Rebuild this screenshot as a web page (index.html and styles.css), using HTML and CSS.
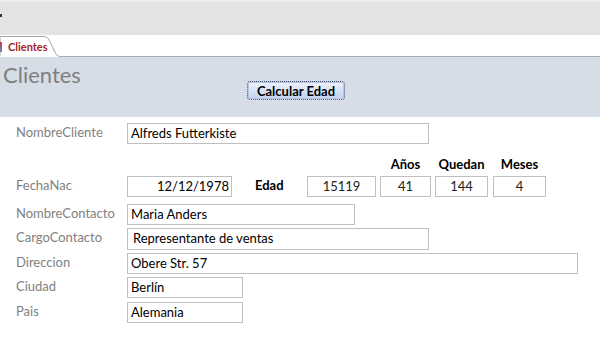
FILE: index.html
```html
<!DOCTYPE html>
<html lang="es">
<head>
<meta charset="utf-8">
<title>Clientes</title>
<link rel="stylesheet" href="styles.css">
</head>
<body>
<div class="app">
  <div class="topbar"><span class="glyph"></span></div>
  <div class="tabbar">
    <div class="tab">
      <svg class="tab-shape" width="60" height="22" viewBox="0 0 60 22" aria-hidden="true">
        <path d="M0 21.5 V1.5 H44 Q47 1.5 48.5 4 L56 19 Q57.5 21.5 60 21.5" fill="#fff" stroke="#a9a49a" stroke-width="1"/>
      </svg>
      <span class="tab-icon"></span>
      <span class="tab-label">Clientes</span>
    </div>
    <div class="tab-rest"></div>
  </div>
  <div class="header">
    <h1 class="title">Clientes</h1>
    <button class="calc-btn" type="button">Calcular Edad</button>
  </div>
  <div class="form">
    <div class="row row-1">
      <label class="lbl">NombreCliente</label>
      <div class="box w302">Alfreds Futterkiste</div>
    </div>
    <div class="row heads">
      <span class="head w51">Años</span>
      <span class="head w53">Quedan</span>
      <span class="head w53 last">Meses</span>
    </div>
    <div class="row row-date">
      <label class="lbl">FechaNac</label>
      <div class="box w105 right">12/12/1978</div>
      <span class="edad">Edad</span>
      <div class="box w69 center">15119</div>
      <div class="box w51 center">41</div>
      <div class="box w53 center">144</div>
      <div class="box w53 center last">4</div>
    </div>
    <div class="row r-contact">
      <label class="lbl">NombreContacto</label>
      <div class="box w228">Maria Anders</div>
    </div>
    <div class="row r-cargo">
      <label class="lbl">CargoContacto</label>
      <div class="box w302 pad5">Representante de ventas</div>
    </div>
    <div class="row r-dir">
      <label class="lbl">Direccion</label>
      <div class="box w451">Obere Str. 57</div>
    </div>
    <div class="row r-city">
      <label class="lbl">Ciudad</label>
      <div class="box w116">Berlín</div>
    </div>
    <div class="row r-pais">
      <label class="lbl">Pais</label>
      <div class="box w116">Alemania</div>
    </div>
  </div>
</div>
</body>
</html>
```
FILE: styles.css
```css
* { box-sizing: border-box; }
html, body {
  margin: 0;
  padding: 0;
  width: 600px;
  height: 349px;
  overflow: hidden;
  background: #fff;
  font-family: Lato, "Open Sans", sans-serif;
}
.app {
  display: flex;
  flex-direction: column;
  width: 600px;
  height: 349px;
}
.topbar {
  height: 35px;
  background: #e4e4e4;
  border-top: 2px solid #ececec;
}
.glyph {
  display: block;
  width: 2px;
  height: 3px;
  background: #333;
  margin-top: 12px;
}
.tabbar {
  height: 22px;
  background: #fff;
  display: flex;
  align-items: flex-end;
}
.tab {
  position: relative;
  width: 60px;
  height: 22px;
  display: flex;
  align-items: center;
  flex: none;
}
.tab-shape {
  position: absolute;
  left: 0;
  top: 0;
}
.tab-icon {
  position: relative;
  width: 2px;
  height: 10px;
  margin-top: 2px;
  background: linear-gradient(#c23b3b, #6d86b5);
}
.tab-label {
  position: relative;
  margin-left: 6px;
  margin-top: 1px;
  font-size: 11px;
  font-weight: 700;
  color: #a4262c;
}
.tab-rest {
  flex: 1;
  height: 1px;
  background: #a9acb2;
}
.header {
  height: 60px;
  background: #d6dde6;
  display: flex;
  align-items: flex-start;
}
.title {
  width: 80px;
  flex: none;
  margin: 5px 0 0 3px;
  font-size: 22px;
  font-weight: 400;
  color: #7f7f7f;
  line-height: 26px;
  white-space: nowrap;
}
.calc-btn {
  margin: 24px 0 0 164px;
  width: 98px;
  height: 19px;
  padding: 0;
  border: 1px dotted #3c4a73;
  border-radius: 3px;
  background: linear-gradient(#eef2fb, #d8e2f6 50%, #c3d2ef);
  font-family: inherit;
  font-size: 13px;
  font-weight: 700;
  line-height: 16px;
  color: #000;
  box-shadow: inset 0 0 0 1px #b7c5e4;
}
.form {
  flex: 1;
  display: flex;
  flex-direction: column;
}
.row {
  display: flex;
  align-items: flex-start;
  height: 21px;
}
.lbl {
  width: 127px;
  padding-left: 16px;
  font-size: 13px;
  color: #7f7f7f;
  line-height: 14px;
  padding-top: 2px;
  flex: none;
}
.box {
  height: 21px;
  border: 1px solid #bfbfbf;
  background: #fff;
  font-size: 13px;
  line-height: 19px;
  padding: 0 3px;
  color: #000;
  white-space: nowrap;
  flex: none;
}
.pad5 { padding-left: 5px; height: 22px; }
.right { text-align: right; padding-right: 2px; }
.center { text-align: center; color: #222; }
.w302 { width: 302px; }
.w228 { width: 228px; }
.w451 { width: 451px; }
.w116 { width: 116px; }
.w105 { width: 105px; }
.w69 { width: 69px; }
.w51 { width: 51px; }
.w53 { width: 53px; }
.row-1 { margin-top: 6px; }
.heads {
  margin-top: 13px;
  height: 14px;
  padding-left: 380px;
  gap: 4px;
}
.head {
  text-align: center;
  font-size: 13px;
  font-weight: 700;
  line-height: 14px;
  color: #000;
  white-space: nowrap;
}
.head.last { margin-left: 1px; }
.row-date {
  margin-top: 5px;
  height: 21px;
}
.row-date .box { margin-right: 4px; }
.row-date .box.w105 { margin-right: 0; }
.row-date .box.last { margin-left: 1px; }
.edad {
  width: 75px;
  padding-left: 23px;
  font-size: 13px;
  font-weight: 700;
  line-height: 14px;
  padding-top: 2px;
  color: #000;
}
.r-contact { margin-top: 7px; }
.r-cargo { margin-top: 3px; height: 22px; }
.r-dir { margin-top: 3px; }
.r-city { margin-top: 3px; }
.r-pais { margin-top: 4px; }
```
